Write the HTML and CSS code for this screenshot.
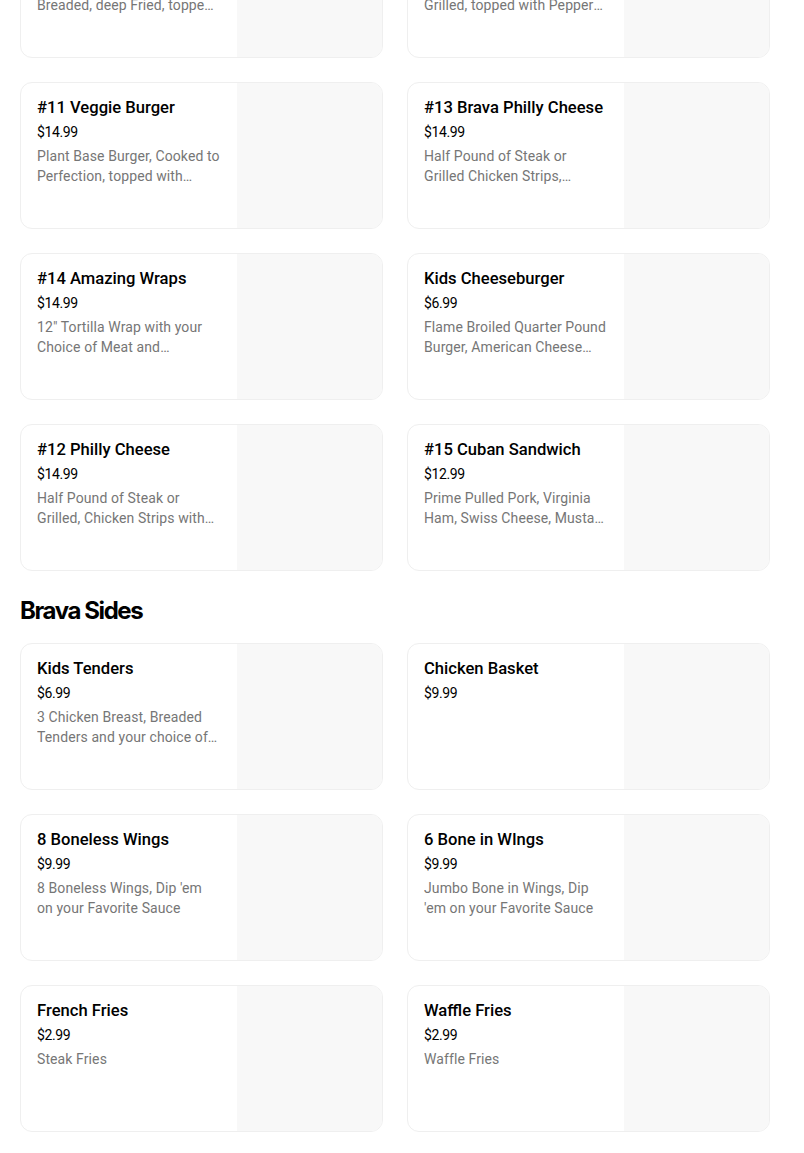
FILE: index.html
```html
<!DOCTYPE html>
<html>
<head>
  <title>Brava Menu</title>
  <meta name="viewport" content="width=device-width, initial-scale=1.0">
  <link rel="stylesheet" href="styles.css">
</head>
<body>
  <div class="menu">

    <div class="grid">
      <div class="card">
        <div class="info">
          <div class="name">#10 Fish Sandwich</div>
          <div class="price">$14.99</div>
          <div class="desc">Alaskan Pollock Fillet, Breaded, deep Fried, topped with Tartar Sauce</div>
        </div>
        <div class="pic"></div>
      </div>
      <div class="card">
        <div class="info">
          <div class="name">#9 Brava Chicken</div>
          <div class="price">$14.99</div>
          <div class="desc">Chicken Breast, Marinated, Grilled, topped with Pepper Jack Cheese</div>
        </div>
        <div class="pic"></div>
      </div>

      <div class="card">
        <div class="info">
          <div class="name">#11 Veggie Burger</div>
          <div class="price">$14.99</div>
          <div class="desc">Plant Base Burger, Cooked to Perfection, topped with Lettuce, Tomato and Onions</div>
        </div>
        <div class="pic"></div>
      </div>
      <div class="card">
        <div class="info">
          <div class="name">#13 Brava Philly Cheese</div>
          <div class="price">$14.99</div>
          <div class="desc">Half Pound of Steak or Grilled Chicken Strips, Peppers, Onions and Cheese</div>
        </div>
        <div class="pic"></div>
      </div>

      <div class="card">
        <div class="info">
          <div class="name">#14 Amazing Wraps</div>
          <div class="price">$14.99</div>
          <div class="desc">12" Tortilla Wrap with your Choice of Meat and Vegetables</div>
        </div>
        <div class="pic"></div>
      </div>
      <div class="card">
        <div class="info">
          <div class="name">Kids Cheeseburger</div>
          <div class="price">$6.99</div>
          <div class="desc">Flame Broiled Quarter Pound Burger, American Cheese and Fries</div>
        </div>
        <div class="pic"></div>
      </div>

      <div class="card">
        <div class="info">
          <div class="name">#12 Philly Cheese</div>
          <div class="price">$14.99</div>
          <div class="desc">Half Pound of Steak or Grilled, Chicken Strips with Onions and Cheese</div>
        </div>
        <div class="pic"></div>
      </div>
      <div class="card">
        <div class="info">
          <div class="name">#15 Cuban Sandwich</div>
          <div class="price">$12.99</div>
          <div class="desc">Prime Pulled Pork, Virginia Ham, Swiss Cheese, Mustard and Pickles</div>
        </div>
        <div class="pic"></div>
      </div>
    </div>

    <h2 class="section">Brava Sides</h2>

    <div class="grid">
      <div class="card">
        <div class="info">
          <div class="name">Kids Tenders</div>
          <div class="price">$6.99</div>
          <div class="desc">3 Chicken Breast, Breaded Tenders and your choice of Sauce</div>
        </div>
        <div class="pic"></div>
      </div>
      <div class="card">
        <div class="info">
          <div class="name">Chicken Basket</div>
          <div class="price">$9.99</div>
        </div>
        <div class="pic"></div>
      </div>

      <div class="card">
        <div class="info">
          <div class="name">8 Boneless Wings</div>
          <div class="price">$9.99</div>
          <div class="desc">8 Boneless Wings, Dip 'em on your Favorite Sauce</div>
        </div>
        <div class="pic"></div>
      </div>
      <div class="card">
        <div class="info">
          <div class="name">6 Bone in WIngs</div>
          <div class="price">$9.99</div>
          <div class="desc">Jumbo Bone in Wings, Dip 'em on your Favorite Sauce</div>
        </div>
        <div class="pic"></div>
      </div>

      <div class="card">
        <div class="info">
          <div class="name">French Fries</div>
          <div class="price">$2.99</div>
          <div class="desc">Steak Fries</div>
        </div>
        <div class="pic"></div>
      </div>
      <div class="card">
        <div class="info">
          <div class="name">Waffle Fries</div>
          <div class="price">$2.99</div>
          <div class="desc">Waffle Fries</div>
        </div>
        <div class="pic"></div>
      </div>
    </div>

  </div>
</body>
</html>
```

FILE: styles.css
```css
body {
  margin: 0;
  padding: 0;
  font-family: Roboto, "Noto Sans", sans-serif;
  background: #fff;
  color: #000;
}

/* page is scrolled: the first row sits partly above the window */
.menu {
  width: 750px;
  padding-left: 20px;
  margin-top: -89px;
}

.grid {
  display: grid;
  grid-template-columns: 1fr 1fr;
  gap: 24px;
}

/* one menu item: text on the left, photo slot on the right */
.card {
  display: flex;
  height: 147px;
  box-sizing: border-box;
  border: 1px solid #efefef;
  border-radius: 12px;
  overflow: hidden;
  background: #fff;
}

.info {
  flex: 1;
  min-width: 0;
  padding: 15px 16px 14px;
}

.pic {
  width: 145px;
  height: 100%;
  background: #f8f8f8;
}

.name {
  font-size: 16.6px;
  line-height: 20px;
  font-weight: 500;
  margin-bottom: 4px;
}

.price {
  font-size: 14px;
  line-height: 20px;
  letter-spacing: -0.4px;
  margin-bottom: 4px;
}

.desc {
  font-size: 14px;
  line-height: 20px;
  letter-spacing: 0.1px;
  color: #767676;
  display: -webkit-box;
  -webkit-line-clamp: 2;
  -webkit-box-orient: vertical;
  overflow: hidden;
}

.section {
  margin: 24px 0 16px;
  font-family: Inter, sans-serif;
  font-size: 24px;
  line-height: 32px;
  font-weight: 700;
  letter-spacing: -1.4px;
}
```
